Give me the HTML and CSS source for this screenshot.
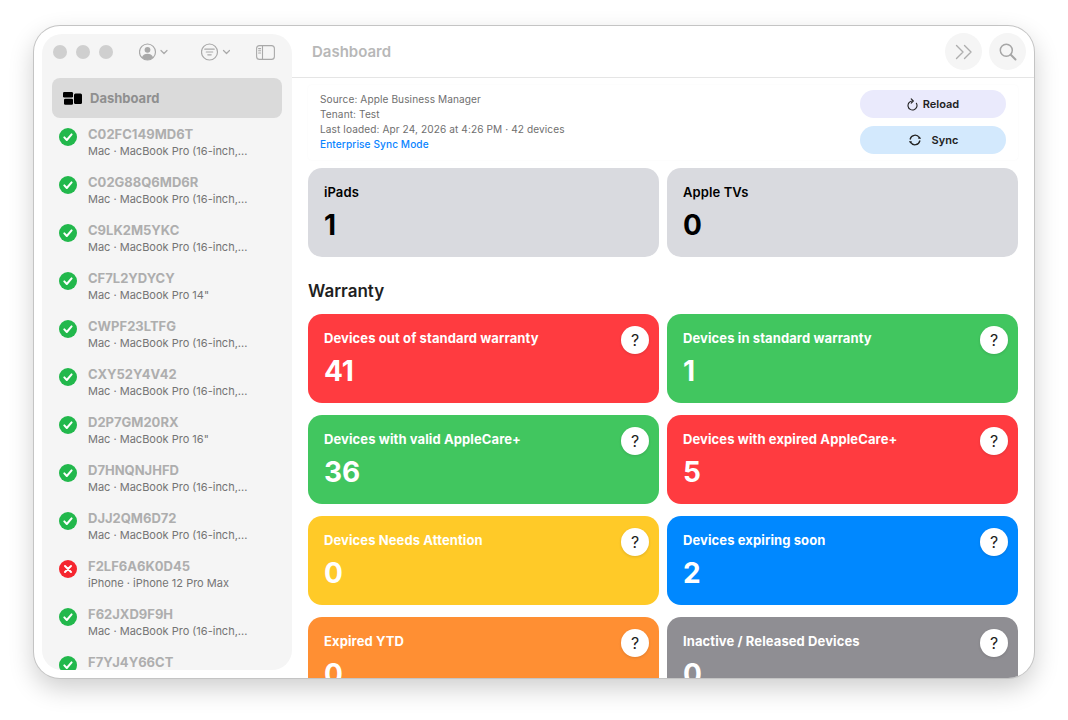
FILE: index.html
```html
<!DOCTYPE html>
<html lang="en">
<head>
    <meta charset="UTF-8">
    <title>Dashboard</title>
    <link rel="stylesheet" href="styles.css">
</head>
<body>
    <svg class="defs" width="0" height="0">
        <symbol id="ok" viewBox="0 0 18 18">
            <circle cx="9" cy="9" r="9" fill="#22b84c"/>
            <path d="M5.300 9.400l2.500 2.600 4.800-5.600" fill="none" stroke="#fff" stroke-width="2" stroke-linecap="round" stroke-linejoin="round"/>
        </symbol>
        <symbol id="bad" viewBox="0 0 18 18">
            <circle cx="9" cy="9" r="9" fill="#f5262f"/>
            <path d="M6 6l6 6M12 6l-6 6" fill="none" stroke="#fff" stroke-width="2" stroke-linecap="round"/>
        </symbol>
    </svg>

    <div class="window">
        <aside class="sidebar">
            <div class="sidebar-top">
                <div class="lights"><span></span><span></span><span></span></div>
                <svg class="tool-icon user-icon" width="30" height="18" viewBox="0 0 30 18" fill="none" stroke="#a9a9a9" stroke-width="1.200">
                    <circle cx="8.500" cy="9" r="8"/>
                    <circle cx="8.500" cy="6.800" r="2.900" fill="#a9a9a9" stroke="none"/>
                    <path d="M2.800 14.500c1-2.800 3.300-3.700 5.700-3.700s4.700.9 5.700 3.700c-1.500 1.500-3.500 2.400-5.700 2.400s-4.200-.9-5.700-2.400z" fill="#a9a9a9" stroke="none"/>
                    <path d="M22 7.500l3 3 3-3" stroke-linecap="round" stroke-linejoin="round"/>
                </svg>
                <svg class="tool-icon filter-icon" width="29" height="18" viewBox="0 0 29 18" fill="none" stroke="#a9a9a9" stroke-width="1.200" stroke-linecap="round">
                    <circle cx="8.500" cy="9" r="8"/>
                    <path d="M3.800 6.200h9.400M5.300 9h6.400M6.800 11.800h3.400"/>
                    <path d="M22.500 7.500l3 3 3-3" stroke-linejoin="round"/>
                </svg>
                <svg class="tool-icon panel-icon" width="19" height="15" viewBox="0 0 19 15" fill="none" stroke="#a9a9a9" stroke-width="1.100">
                    <rect x=".6" y=".6" width="17.800" height="13.800" rx="3"/>
                    <path d="M6.500 .6v13.800"/>
                    <path d="M2.600 3.600h2M2.600 5.800h2M2.600 8h2" stroke-linecap="round"/>
                </svg>
            </div>
            <div class="nav-selected">
                <svg width="19" height="13" viewBox="0 0 19 13" fill="#000">
                    <rect x="0" y="0" width="10" height="5.600" rx="1.300"/>
                    <rect x="1" y="6.800" width="9" height="6" rx="1.300"/>
                    <rect x="11" y="1.400" width="8" height="10.600" rx="1.500"/>
                </svg>
                <span>Dashboard</span>
            </div>
            <div class="device-list">
                <div class="device"><svg class="status"><use href="#ok"/></svg><div><h4>C02FC149MD6T</h4><p>Mac · MacBook Pro (16-inch,...</p></div></div>
                <div class="device"><svg class="status"><use href="#ok"/></svg><div><h4>C02G88Q6MD6R</h4><p>Mac · MacBook Pro (16-inch,...</p></div></div>
                <div class="device"><svg class="status"><use href="#ok"/></svg><div><h4>C9LK2M5YKC</h4><p>Mac · MacBook Pro (16-inch,...</p></div></div>
                <div class="device"><svg class="status"><use href="#ok"/></svg><div><h4>CF7L2YDYCY</h4><p>Mac · MacBook Pro 14"</p></div></div>
                <div class="device"><svg class="status"><use href="#ok"/></svg><div><h4>CWPF23LTFG</h4><p>Mac · MacBook Pro (16-inch,...</p></div></div>
                <div class="device"><svg class="status"><use href="#ok"/></svg><div><h4>CXY52Y4V42</h4><p>Mac · MacBook Pro (16-inch,...</p></div></div>
                <div class="device"><svg class="status"><use href="#ok"/></svg><div><h4>D2P7GM20RX</h4><p>Mac · MacBook Pro 16"</p></div></div>
                <div class="device"><svg class="status"><use href="#ok"/></svg><div><h4>D7HNQNJHFD</h4><p>Mac · MacBook Pro (16-inch,...</p></div></div>
                <div class="device"><svg class="status"><use href="#ok"/></svg><div><h4>DJJ2QM6D72</h4><p>Mac · MacBook Pro (16-inch,...</p></div></div>
                <div class="device"><svg class="status"><use href="#bad"/></svg><div><h4>F2LF6A6K0D45</h4><p>iPhone · iPhone 12 Pro Max</p></div></div>
                <div class="device"><svg class="status"><use href="#ok"/></svg><div><h4>F62JXD9F9H</h4><p>Mac · MacBook Pro (16-inch,...</p></div></div>
                <div class="device"><svg class="status"><use href="#ok"/></svg><div><h4>F7YJ4Y66CT</h4><p>Mac · MacBook Pro (16-inch,...</p></div></div>
            </div>
        </aside>

        <main class="main">
            <div class="toolbar">
                <h2>Dashboard</h2>
                <div class="round-btn">
                    <svg width="18" height="16" viewBox="0 0 18 16" fill="none" stroke="#aeaeae" stroke-width="1.400" stroke-linecap="round" stroke-linejoin="round">
                        <path d="M1.500 1.500L8 8 1.500 14.500M9.500 1.500L16 8 9.500 14.500"/>
                    </svg>
                </div>
                <div class="round-btn">
                    <svg width="18" height="18" viewBox="0 0 18 18" fill="none" stroke="#a6a6a6" stroke-width="1.500" stroke-linecap="round">
                        <circle cx="7.300" cy="7.300" r="6"/>
                        <path d="M11.800 11.800L16.500 16.500" stroke-width="2"/>
                    </svg>
                </div>
            </div>
            <div class="content">
                <div class="info-panel">
                    <div class="info-text">
                        <p>Source: Apple Business Manager</p>
                        <p>Tenant: Test</p>
                        <p>Last loaded: Apr 24, 2026 at 4:26 PM · 42 devices</p>
                        <p class="link">Enterprise Sync Mode</p>
                    </div>
                    <div class="actions">
                        <button class="reload">
                            <svg width="11" height="13" viewBox="0 0 11 13" fill="none" stroke="#222" stroke-width="1.100" stroke-linecap="round" stroke-linejoin="round">
                                <path d="M5.500 3A4.500 4.500 0 1 0 9.400 5.250"/>
                                <path d="M4.200 .8L6.300 3 4.200 5.200"/>
                            </svg>
                            Reload
                        </button>
                        <button class="sync">
                            <svg width="14" height="12" viewBox="0 0 14 12" fill="none" stroke="#222" stroke-width="1.300" stroke-linecap="round">
                                <path d="M2.200 5A5 5 0 0 1 11.300 3.600"/>
                                <path d="M11.800 7A5 5 0 0 1 2.700 8.400"/>
                                <path d="M10 4.800h3.200l-1.600-2.200zM4 7.200H.8l1.600 2.200z" fill="#222" stroke="none"/>
                            </svg>
                            Sync
                        </button>
                    </div>
                </div>

                <div class="grid top-grid">
                    <div class="card gray"><h3>iPads</h3><strong>1</strong></div>
                    <div class="card gray"><h3>Apple TVs</h3><strong>0</strong></div>
                </div>

                <h2 class="section">Warranty</h2>

                <div class="grid">
                    <div class="card red"><h3>Devices out of standard warranty</h3><strong>41</strong><span class="help">?</span></div>
                    <div class="card green"><h3>Devices in standard warranty</h3><strong>1</strong><span class="help">?</span></div>
                    <div class="card green"><h3>Devices with valid AppleCare+</h3><strong>36</strong><span class="help">?</span></div>
                    <div class="card red"><h3>Devices with expired AppleCare+</h3><strong>5</strong><span class="help">?</span></div>
                    <div class="card yellow"><h3>Devices Needs Attention</h3><strong>0</strong><span class="help">?</span></div>
                    <div class="card blue"><h3>Devices expiring soon</h3><strong>2</strong><span class="help">?</span></div>
                    <div class="card orange"><h3>Expired YTD</h3><strong>0</strong><span class="help">?</span></div>
                    <div class="card slate"><h3>Inactive / Released Devices</h3><strong>0</strong><span class="help">?</span></div>
                </div>
            </div>
        </main>
    </div>
</body>
</html>
```

FILE: styles.css
```css
* {
    box-sizing: border-box;
}

html, body {
    height: 100%;
}

body {
    margin: 0;
    padding: 26px 34px 42px;
    background: #fff;
    font-family: Inter, "Liberation Sans", sans-serif;
    overflow: hidden;
}

h2, h3, h4, p {
    margin: 0;
}

.defs {
    position: absolute;
}

.window {
    display: flex;
    height: 652px;
    background: #fff;
    border-radius: 26px;
    overflow: hidden;
    box-shadow: 0 0 0 1px #c4c4c4, 0 10px 26px rgba(0, 0, 0, 0.2);
}

.sidebar {
    display: flex;
    flex-direction: column;
    width: 250px;
    height: 636px;
    margin: 8px 0 0 8px;
    background: #f5f5f5;
    border-radius: 20px;
    overflow: hidden;
    flex-shrink: 0;
}

.sidebar-top {
    display: flex;
    align-items: center;
    height: 36px;
    padding: 0 0 0 11px;
    flex-shrink: 0;
}

.lights {
    display: flex;
    gap: 9px;
    margin-right: 26px;
}

.lights span {
    width: 14px;
    height: 14px;
    border-radius: 50%;
    background: #cfcfcf;
}

.user-icon {
    margin-right: 32px;
}

.filter-icon {
    margin-right: 26px;
}

.nav-selected {
    display: flex;
    align-items: center;
    gap: 8px;
    height: 40px;
    margin: 8px 10px 0;
    padding: 0 11px;
    background: #dadada;
    border-radius: 8px;
    font-size: 13px;
    font-weight: 700;
    color: #8f8f8f;
    flex-shrink: 0;
}

.device-list {
    padding: 8px 0 0 17px;
}

.device {
    display: flex;
    gap: 11px;
    height: 48px;
}

.status {
    width: 18px;
    height: 18px;
    margin-top: 2px;
    flex-shrink: 0;
}

.device h4 {
    font-size: 13px;
    line-height: 17px;
    font-weight: 700;
    color: #aeaeae;
}

.device p {
    font-size: 11px;
    line-height: 16px;
    color: #747474;
}

.main {
    flex: 1;
    min-width: 0;
    display: flex;
    flex-direction: column;
}

.toolbar {
    display: flex;
    align-items: center;
    gap: 7px;
    height: 52px;
    padding: 0 8px 0 20px;
    border-bottom: 1px solid #e5e5e5;
    flex-shrink: 0;
}

.toolbar h2 {
    flex: 1;
    font-size: 15px;
    font-weight: 600;
    color: #b8b8b8;
}

.round-btn {
    display: flex;
    align-items: center;
    justify-content: center;
    width: 37px;
    height: 37px;
    background: #f5f5f5;
    border-radius: 50%;
}

.content {
    padding: 7px 16px 0;
}

.info-panel {
    display: flex;
    justify-content: space-between;
    height: 75px;
    padding: 5px 12px;
    border-radius: 4px;
    box-shadow: 0 0 2px rgba(0, 0, 0, 0.04);
}

.info-text {
    padding-top: 2px;
}

.info-text p {
    font-size: 10.100px;
    letter-spacing: 0.1px;
    line-height: 15px;
    color: #6f6f6f;
}

.info-text .link {
    font-weight: 500;
    color: #0a84ff;
}

.actions {
    display: flex;
    flex-direction: column;
    gap: 8px;
}

.actions button {
    display: flex;
    align-items: center;
    justify-content: center;
    gap: 5px;
    width: 146px;
    height: 28px;
    border: none;
    border-radius: 14px;
    font-family: inherit;
    font-size: 11px;
    font-weight: 600;
    color: #222;
}

.reload {
    background: #eaeafc;
}

.sync {
    background: #d3e9fd;
}

.sync svg {
    margin-right: 5px;
}

.grid {
    display: grid;
    grid-template-columns: 351px 351px;
    column-gap: 8px;
    row-gap: 12px;
}

.top-grid {
    margin-top: 8px;
}

.section {
    margin: 24px 0 13px;
    font-size: 17px;
    line-height: 20px;
    font-weight: 600;
    color: #1f1f1f;
}

.card {
    position: relative;
    height: 89px;
    padding: 16px;
    border-radius: 14px;
    color: #fff;
}

.card h3 {
    font-size: 13px;
    letter-spacing: 0.1px;
    line-height: 17px;
    font-weight: 700;
}

.card strong {
    display: block;
    margin-top: 6px;
    font-size: 28px;
    line-height: 36px;
    font-weight: 700;
}

.gray {
    background: #d9dadf;
    color: #000;
}

.gray h3 {
    font-weight: 600;
}

.red {
    background: #ff3b40;
}

.green {
    background: #41c65f;
}

.yellow {
    background: #ffca28;
}

.blue {
    background: #0088ff;
}

.orange {
    background: #ff8f33;
}

.slate {
    background: #8f8e93;
}

.help {
    position: absolute;
    top: 12px;
    right: 10px;
    display: flex;
    align-items: center;
    justify-content: center;
    width: 28px;
    height: 28px;
    background: #fff;
    border-radius: 50%;
    font-size: 16px;
    font-weight: 400;
    color: #222;
    box-shadow: 0 1px 3px rgba(0, 0, 0, 0.12);
}
```
